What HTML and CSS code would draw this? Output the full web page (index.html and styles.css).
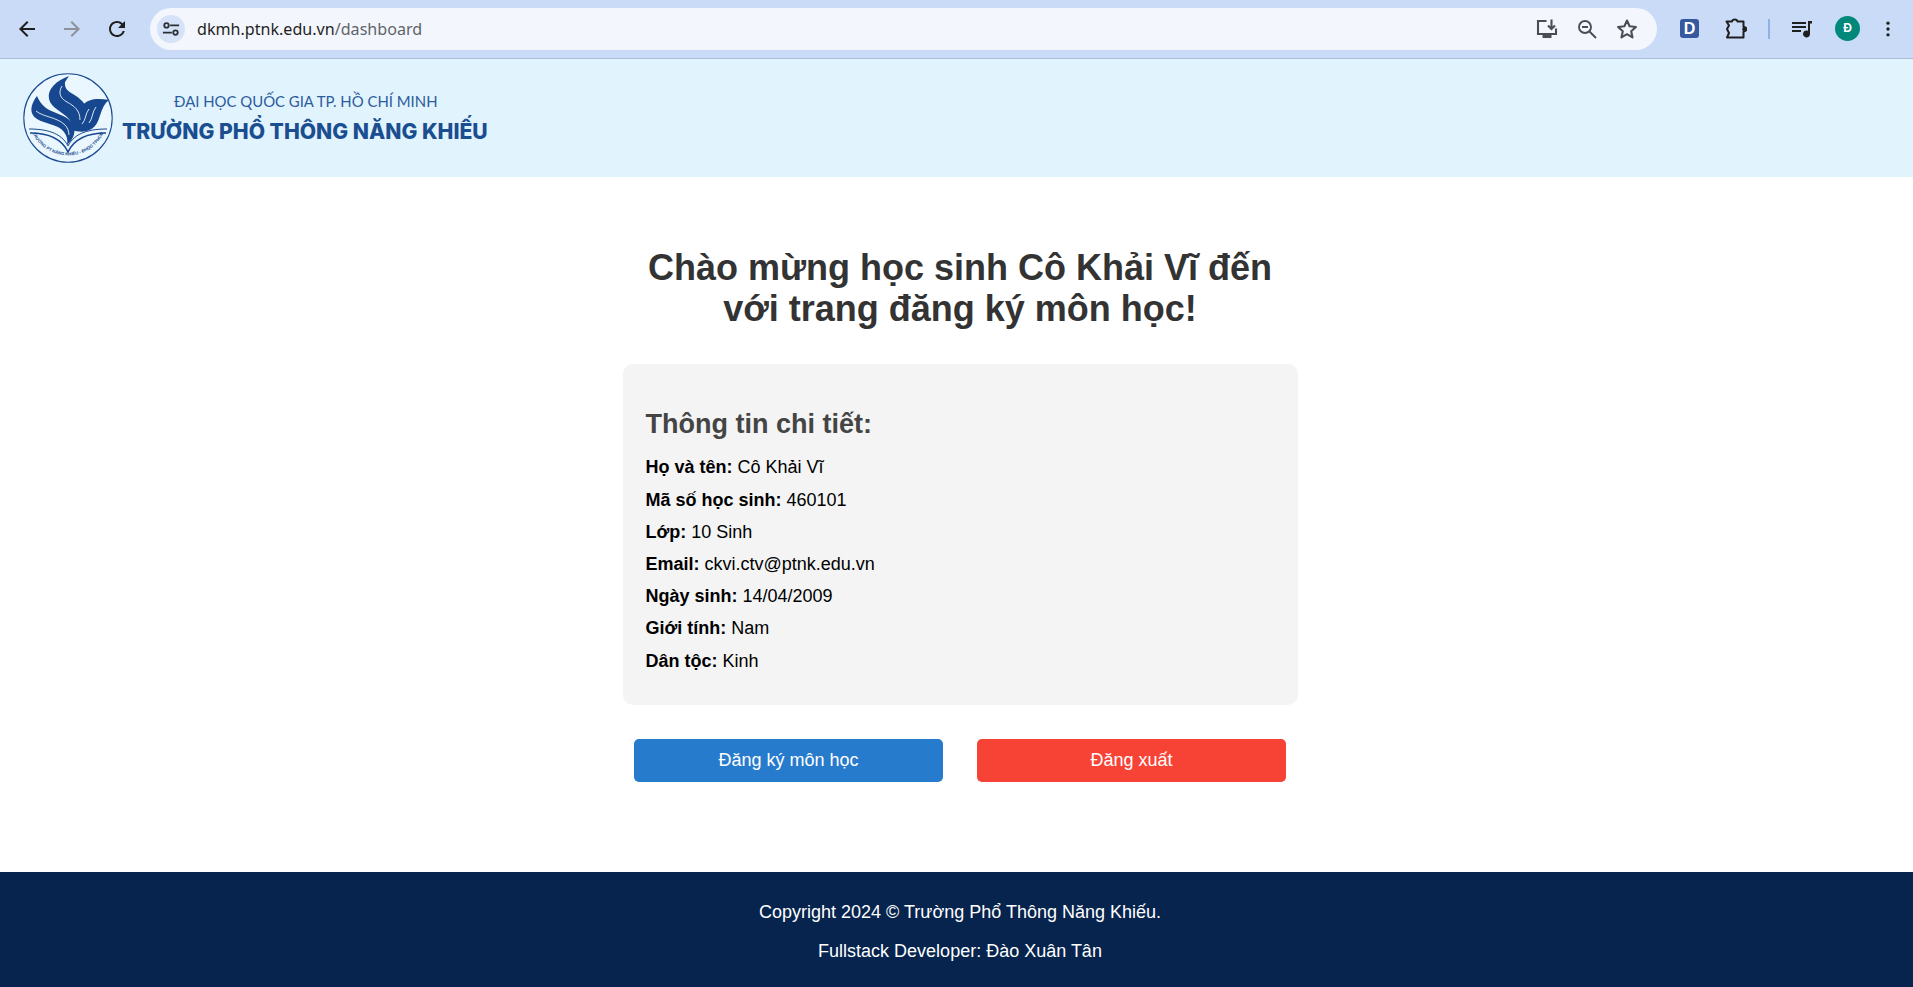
FILE: index.html
```html
<!DOCTYPE html>
<html lang="vi">
<head>
<meta charset="utf-8">
<title>Dashboard</title>
<link rel="stylesheet" href="styles.css">
</head>
<body>
<div class="chrome">
  <div class="nav">
    <svg class="ico" viewBox="0 0 24 24"><path fill="#1f1f1f" d="M20 11H7.83l5.59-5.59L12 4l-8 8 8 8 1.41-1.41L7.83 13H20v-2z"/></svg>
    <svg class="ico" viewBox="0 0 24 24"><path fill="#8d929a" d="M4 11h12.17l-5.59-5.59L12 4l8 8-8 8-1.41-1.41L16.17 13H4v-2z"/></svg>
    <svg class="ico" viewBox="0 0 24 24"><path fill="#1f1f1f" d="M17.65 6.35A7.95 7.95 0 0012 4c-4.42 0-7.99 3.58-7.99 8s3.57 8 7.99 8c3.73 0 6.84-2.55 7.73-6h-2.08A5.99 5.99 0 0112 18c-3.31 0-6-2.69-6-6s2.69-6 6-6c1.66 0 3.14.69 4.22 1.78L13 11h7V4l-2.35 2.35z"/></svg>
  </div>
  <div class="omnibox">
    <span class="chip">
      <svg class="tune" viewBox="0 0 20 20"><g fill="none" stroke="#2b2f36" stroke-width="2"><path d="M9 6h10M1 14h10"/><circle cx="5" cy="6" r="2.500"/><circle cx="15" cy="14" r="2.500"/></g></svg>
    </span>
    <span class="url">dkmh.ptnk.edu.vn<span class="url-path">/dashboard</span></span>
    <span class="omni-icons">
      <svg class="ico" viewBox="0 0 24 24"><g fill="none" stroke="#4a4d52" stroke-width="2.100"><path d="M11.500 4H3v13h18v-5.500"/></g><path fill="#4a4d52" d="M7.500 17h9v4h-9z"/><path fill="none" stroke="#4a4d52" stroke-width="2.100" d="M16.500 2.500v9M13 8.500l3.500 3.500 3.500-3.500"/></svg>
      <svg class="ico" viewBox="0 0 24 24"><g fill="none" stroke="#4a4d52" stroke-width="1.900"><circle cx="10" cy="10" r="6"/><path d="M14.500 14.500L21 21M7 10h6"/></g></svg>
      <svg class="ico" viewBox="0 0 24 24"><path fill="none" stroke="#4a4d52" stroke-width="2.100" stroke-linejoin="round" d="M12 3.500l2.600 5.800 6.300.7-4.700 4.200 1.300 6.200-5.500-3.200-5.500 3.200 1.300-6.200L3.100 10l6.300-.7z"/></svg>
    </span>
  </div>
  <div class="exts">
    <span class="ext-d">D</span>
    <svg class="ico puzzle" viewBox="0 0 24 24"><path fill="none" stroke="#1f1f1f" stroke-width="2" stroke-linejoin="round" d="M3.500 4.500H9a2.800 2.500 0 015.500 0h6V10h.5a2.200 2.200 0 010 4.400h-.5v6.100H4l2-4.500L4 12l2-3.500z"/><circle cx="21" cy="12.200" r="1.800" fill="#1f1f1f"/></svg>
    <span class="sep"></span>
    <svg class="ico" viewBox="0 0 24 24"><path fill="#1f1f1f" d="M2 5h14v2H2zM2 9h14v2H2zM2 13h9v2H2z"/><path fill="#1f1f1f" d="M18 4h4v2.500h-2V17a3.500 3.500 0 11-2-3.200z"/></svg>
    <span class="avatar">Đ</span>
    <svg class="ico dots" viewBox="0 0 24 24"><g fill="#1f1f1f"><circle cx="12" cy="5" r="2"/><circle cx="12" cy="12" r="2"/><circle cx="12" cy="19" r="2"/></g></svg>
  </div>
</div>

<header class="brand">
  <svg class="logo" viewBox="0 0 90 90">
    <defs><path id="arc" d="M8.500 58 A39.500 39.500 0 0 0 81.500 58"/></defs>
    <circle cx="45" cy="45" r="44.200" fill="#fff" fill-opacity=".35" stroke="#1c4a92" stroke-width="1.100"/>
    <g fill="#17488f">
      <path d="M46 3C33 8 24 16 26 26C28 35 40 39 46 46C49 50 49 54 47 59C56 56 63 49 64 41C65 33 59 27 53 23C47 19 41 17 42 9Z"/>
      <path d="M14 23C7 32 6 41 14 46C22 51 35 51 41 59C44 63 45 67 44 72C51 66 54 57 49 50C43 41 31 41 23 35C19 32 16 28 14 23Z"/>
      <path d="M86 27C74 25 65 26 60 32C55 39 57 50 49 57C58 60 67 59 72 53C78 46 77 34 86 27Z"/>
    </g>
    <g fill="none" stroke="#eaf6fd" stroke-width=".9">
      <path d="M39 13C35 20 37 25 44 29C51 33 57 37 57 47"/>
      <path d="M13 38C20 44 34 44 42 52C44 54 46 58 46 62"/>
      <path d="M66 36C62 41 63 47 59 51"/>
      <path d="M73 34C69 39 70 45 66 50"/>
    </g>
    <g fill="none" stroke="#17488f">
      <path stroke-width="1" d="M6 56c16 0 32 3 39 17 7-14 23-17 39-17"/>
      <path stroke-width="1.600" d="M7 60c15 0 31 4 38 19 7-15 23-19 38-19"/>
    </g>
    <text class="logo-arc"><textPath href="#arc" startOffset="50%" text-anchor="middle">TRƯỜNG PT NĂNG KHIẾU - ĐHQG TPHCM</textPath></text>
  </svg>
  <div class="brand-text">
    <div class="brand-top">ĐẠI HỌC QUỐC GIA TP. HỒ CHÍ MINH</div>
    <div class="brand-name">TRƯỜNG PHỔ THÔNG NĂNG KHIẾU</div>
  </div>
</header>

<main class="main">
  <div class="container">
    <h1 class="title">Chào mừng học sinh Cô Khải Vĩ đến với trang đăng ký môn học!</h1>
    <section class="card">
      <h2 class="card-title">Thông tin chi tiết:</h2>
      <p class="row"><strong>Họ và tên:</strong> Cô Khải Vĩ</p>
      <p class="row"><strong>Mã số học sinh:</strong> 460101</p>
      <p class="row"><strong>Lớp:</strong> 10 Sinh</p>
      <p class="row"><strong>Email:</strong> ckvi.ctv@ptnk.edu.vn</p>
      <p class="row"><strong>Ngày sinh:</strong> 14/04/2009</p>
      <p class="row"><strong>Giới tính:</strong> Nam</p>
      <p class="row"><strong>Dân tộc:</strong> Kinh</p>
    </section>
    <div class="actions">
      <a class="btn btn-blue">Đăng ký môn học</a>
      <a class="btn btn-red">Đăng xuất</a>
    </div>
  </div>
</main>

<footer class="footer">
  <p>Copyright 2024 © Trường Phổ Thông Năng Khiếu.</p>
  <p>Fullstack Developer: Đào Xuân Tân</p>
</footer>
</body>
</html>
```
FILE: styles.css
```css
* { box-sizing: border-box; }
html, body { margin: 0; height: 100%; }
body {
  display: flex;
  flex-direction: column;
  height: 987px;
  overflow: hidden;
  font-family: "Liberation Sans", Arial, sans-serif;
  background: #fff;
}
.chrome {
  height: 59px;
  flex: none;
  display: flex;
  align-items: center;
  background: #c9dbf6;
  border-bottom: 1px solid #a9bcd9;
  padding: 0 0 1px 15px;
}
.nav { display: flex; gap: 21px; width: 135px; flex: none; }
.ico { width: 24px; height: 24px; flex: none; display: block; }
.omnibox {
  width: 1507px;
  height: 42px;
  flex: none;
  display: flex;
  align-items: center;
  border-radius: 21px;
  background: #f3f7fd;
  padding: 0 18px 0 7px;
}
.chip {
  width: 28px;
  height: 28px;
  flex: none;
  border-radius: 50%;
  background: #d5e2f7;
  display: flex;
  align-items: center;
  justify-content: center;
}
.tune { width: 18px; height: 18px; }
.url {
  margin-left: 12px;
  font: 16.100px/20px "Noto Sans", Arial, sans-serif;
  color: #1f1f1f;
}
.url-path { color: #5f6368; }
.omni-icons { margin-left: auto; display: flex; gap: 16px; }
.exts { display: flex; align-items: center; margin-left: 23px; }
.ext-d {
  width: 19px;
  height: 19px;
  border-radius: 3px;
  background: #36589f;
  color: #fff;
  font: bold 16px/19px "Liberation Sans", Arial, sans-serif;
  text-align: center;
}
.puzzle { margin-left: 24px; }
.sep { width: 2px; height: 20px; background: #8fb2e6; margin: 0 0 0 21px; }
.exts .sep + .ico { margin-left: 20px; }
.avatar {
  width: 25px;
  height: 25px;
  margin-left: 21px;
  border-radius: 50%;
  background: #00897b;
  color: #fff;
  font: bold 12px/25px "Liberation Sans", Arial, sans-serif;
  text-align: center;
}
.dots { margin-left: 18px; width: 20px; height: 20px; }

.brand {
  height: 118px;
  flex: none;
  background: #e1f3fd;
  display: flex;
  align-items: center;
  padding: 0 0 0 23px;
}
.logo { width: 90px; height: 90px; flex: none; overflow: visible; }
.logo-arc { font: bold 4.300px "Liberation Sans", Arial, sans-serif; fill: #17488f; }
.brand-text { margin-left: 9px; }
.brand-top {
  margin-left: 52px;
  font: 14.900px/20px "Lato", Arial, sans-serif;
  color: #2c5c9e;
  white-space: nowrap;
}
.brand-name {
  margin-top: 7.400px;
  font: 800 21.150px/26px "Inter", Arial, sans-serif;
  color: #1a4e90;
  white-space: nowrap;
}

.main {
  flex: 1;
  display: flex;
  justify-content: center;
  padding: 70px 0 0 7px;
}
.container { width: 675px; }
.title {
  margin: 0 0 34px;
  font-size: 36px;
  line-height: 41.400px;
  font-weight: bold;
  color: #333;
  text-align: center;
}
.card {
  background: #f4f4f4;
  border-radius: 10px;
  padding: 45.500px 23px 20px;
  height: 341px;
}
.card-title {
  margin: 0 0 11px;
  font-size: 27px;
  line-height: 31px;
  font-weight: bold;
  color: #444;
}
.row {
  margin: 0;
  font-size: 18px;
  line-height: 32.200px;
  color: #000;
}
.actions {
  display: flex;
  gap: 34px;
  padding: 34px 12px 0 11px;
}
.btn {
  flex: 1;
  height: 43px;
  border-radius: 5px;
  color: #fff;
  font-size: 18px;
  line-height: 42px;
  text-align: center;
  padding-left: 1px;
}
.btn-blue { background: #277bcd; }
.btn-red { background: #f64336; }

.footer {
  height: 115px;
  flex: none;
  background: #06244d;
  color: #fff;
  text-align: center;
  padding: 30px 0 0 7px;
  font-size: 18px;
}
.footer p { margin: 0 0 19px; line-height: 20px; }
```
